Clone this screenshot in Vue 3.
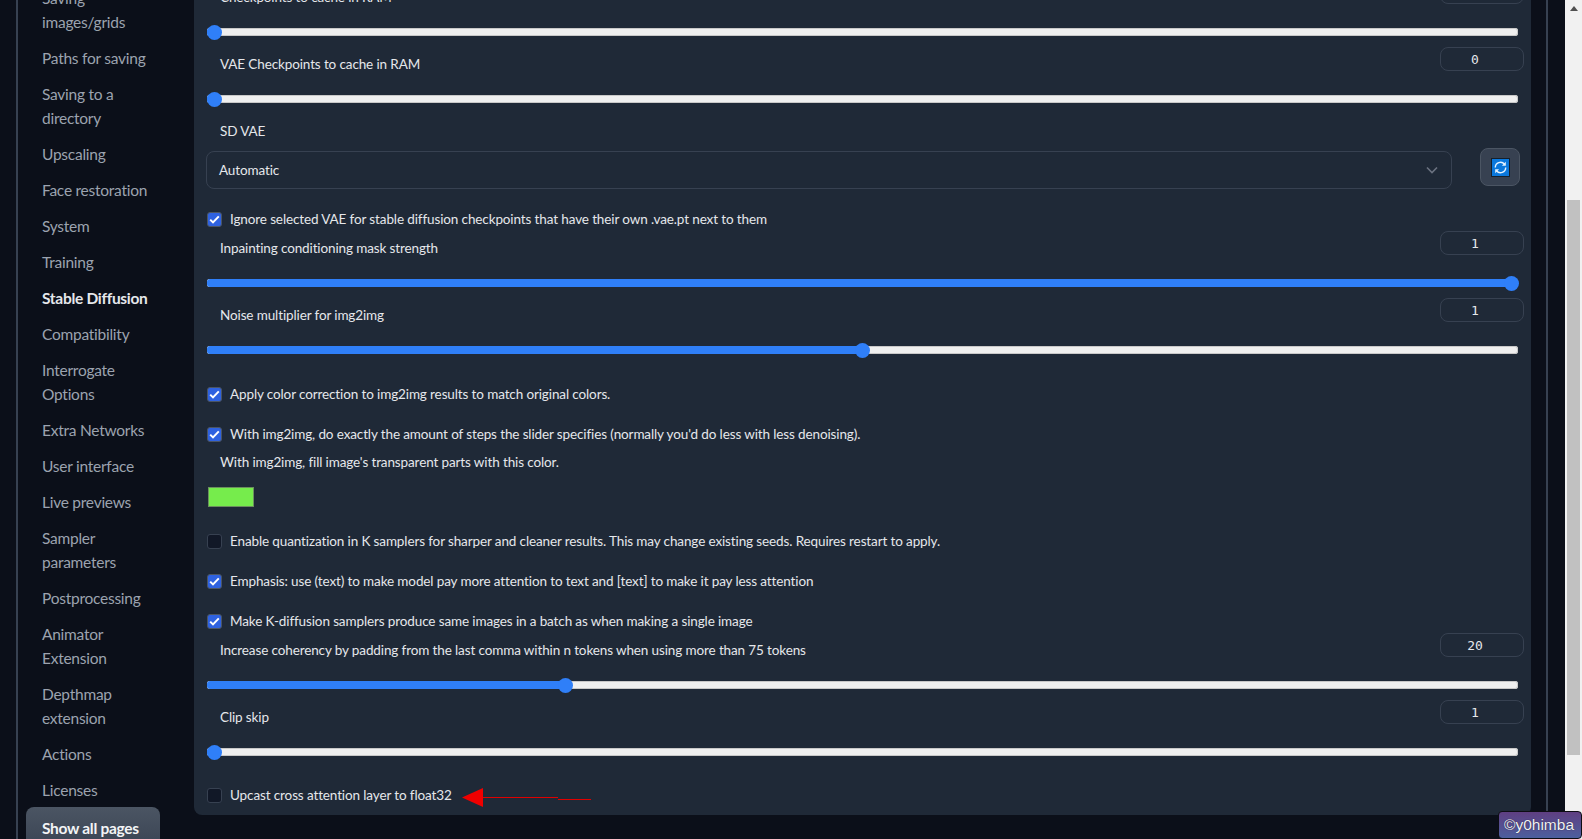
<script setup>
const pages = [
  { name: 'Saving images/grids' },
  { name: 'Paths for saving' },
  { name: 'Saving to a directory' },
  { name: 'Upscaling' },
  { name: 'Face restoration' },
  { name: 'System' },
  { name: 'Training' },
  { name: 'Stable Diffusion', active: true },
  { name: 'Compatibility' },
  { name: 'Interrogate Options' },
  { name: 'Extra Networks' },
  { name: 'User interface' },
  { name: 'Live previews' },
  { name: 'Sampler parameters' },
  { name: 'Postprocessing' },
  { name: 'Animator Extension' },
  { name: 'Depthmap extension' },
  { name: 'Actions' },
  { name: 'Licenses' },
]

const thumbStart = 7
const thumbSpan = 1297
const thumbLeft = (fraction) => `${thumbStart + thumbSpan * fraction}px`
const fillWidth = (fraction) => `${thumbStart + thumbSpan * fraction}px`

const rows = [
  { type: 'slider', label: 'Checkpoints to cache in RAM', value: '0', fraction: 0, gap: 'g0' },
  { type: 'slider', label: 'VAE Checkpoints to cache in RAM', value: '0', fraction: 0, gap: 'g5' },
  { type: 'select', label: 'SD VAE', value: 'Automatic', gap: 'g12' },
  { type: 'check', label: 'Ignore selected VAE for stable diffusion checkpoints that have their own .vae.pt next to them', checked: true, gap: 'g20' },
  { type: 'slider', label: 'Inpainting conditioning mask strength', value: '1', fraction: 1, gap: 'g2' },
  { type: 'slider', label: 'Noise multiplier for img2img', value: '1', fraction: 0.5, gap: 'g5' },
  { type: 'check', label: 'Apply color correction to img2img results to match original colors.', checked: true, gap: 'g24' },
  { type: 'check', label: "With img2img, do exactly the amount of steps the slider specifies (normally you'd do less with less denoising).", checked: true, gap: 'g20' },
  { type: 'color', label: "With img2img, fill image's transparent parts with this color.", gap: 'g8' },
  { type: 'check', label: 'Enable quantization in K samplers for sharper and cleaner results. This may change existing seeds. Requires restart to apply.', checked: false, gap: 'g24' },
  { type: 'check', label: 'Emphasis: use (text) to make model pay more attention to text and [text] to make it pay less attention', checked: true, gap: 'g20' },
  { type: 'check', label: 'Make K-diffusion samplers produce same images in a batch as when making a single image', checked: true, gap: 'g20' },
  { type: 'slider', label: 'Increase coherency by padding from the last comma within n tokens when using more than 75 tokens', value: '20', fraction: 0.2707, gap: 'g2' },
  { type: 'slider', label: 'Clip skip', value: '1', fraction: 0, gap: 'g5' },
  { type: 'check', label: 'Upcast cross attention layer to float32', checked: false, gap: 'g23', arrow: true },
]
</script>

<template>
  <div class="page">
    <div class="frame">
      <nav class="sidebar">
        <a v-for="p in pages" :key="p.name" class="nav-item" :class="{ active: p.active }">{{ p.name }}</a>
        <button class="show-all">Show all pages</button>
      </nav>
      <main class="panel">
        <div v-for="r in rows" :key="r.label" :class="['row', r.gap]">
          <template v-if="r.type === 'slider'">
            <div class="slider-head">
              <span class="label slider-label">{{ r.label }}</span>
              <span class="numbox"><span class="num">{{ r.value }}</span></span>
            </div>
            <div class="slider">
              <div class="track"></div>
              <div class="fill" :style="{ width: fillWidth(r.fraction) }"></div>
              <div class="thumb" :style="{ left: thumbLeft(r.fraction) }"></div>
            </div>
          </template>

          <template v-else-if="r.type === 'select'">
            <div class="label select-label">{{ r.label }}</div>
            <div class="select-line">
              <div class="select">
                <span>{{ r.value }}</span>
                <svg class="chevron" width="12" height="8" viewBox="0 0 12 8" fill="none">
                  <path d="M1 1.5 L6 6.5 L11 1.5" stroke="#6b7280" stroke-width="1.6" />
                </svg>
              </div>
              <button class="refresh" aria-label="Refresh">
                <svg width="19" height="19" viewBox="0 0 19 19">
                  <rect x="0.5" y="0.5" width="18" height="18" fill="#0b78dc" stroke="#15202c" />
                  <path d="M4.3 9.5 A5.2 5.2 0 0 1 13.5 6.2" fill="none" stroke="#e6f3ff" stroke-width="1.4" />
                  <path d="M14.7 9.5 A5.2 5.2 0 0 1 5.5 12.8" fill="none" stroke="#e6f3ff" stroke-width="1.4" />
                  <path d="M14.8 3.8 V7.8 H10.9 Z" fill="#e6f3ff" />
                  <path d="M4.2 15.2 V11.2 H8.1 Z" fill="#e6f3ff" />
                </svg>
              </button>
            </div>
          </template>

          <template v-else-if="r.type === 'check'">
            <label class="check-row">
              <span class="box" :class="{ on: r.checked }">
                <svg v-if="r.checked" width="11" height="9" viewBox="0 0 11 9" fill="none">
                  <path d="M1.2 4.6 L4 7.4 L9.8 1.4" stroke="#fff" stroke-width="2" />
                </svg>
              </span>
              <span class="label">{{ r.label }}</span>
              <svg v-if="r.arrow" class="arrow" width="130" height="20" viewBox="0 0 130 20">
                <path d="M0 9.5 L21 0 V19 Z" fill="#f00000" />
                <path d="M21 9.5 H96" fill="none" stroke="#e00000" stroke-width="1" />
                <path d="M96 11.5 H129" fill="none" stroke="#e00000" stroke-width="1" />
              </svg>
            </label>
          </template>

          <template v-else>
            <div class="label color-label">{{ r.label }}</div>
            <div class="swatch"></div>
          </template>
        </div>
      </main>
    </div>
    <div class="scrollbar">
      <span class="scroll-up"></span>
      <div class="scroll-thumb"></div>
    </div>
    <div class="watermark">©y0himba</div>
  </div>
</template>

<style>
html, body { margin: 0; padding: 0; overflow: hidden; background: #0b0f19; }
</style>

<style scoped>
.page {
  position: relative;
  display: flex;
  width: 1582px;
  height: 839px;
  overflow: hidden;
  background: #0b0f19;
  font-family: Lato, "Noto Sans", sans-serif;
  font-size: 13.5px;
  color: #e5e7eb;
}
.frame {
  display: flex;
  align-items: flex-start;
  box-sizing: border-box;
  width: 1532px;
  height: 839px;
  margin-left: 16px;
  margin-right: 17px;
  border-left: 2px solid #374151;
  border-right: 2px solid #374151;
}
.sidebar {
  display: flex;
  flex-direction: column;
  flex: none;
  box-sizing: border-box;
  width: 176px;
  margin-top: -14px;
  padding-left: 8px;
  padding-right: 8px;
  gap: 12px;
}
.nav-item {
  display: block;
  box-sizing: border-box;
  padding: 0 24px 0 16px;
  font-size: 15.5px;
  letter-spacing: -0.25px;
  line-height: 24px;
  color: #9ca3af;
}
.nav-item.active {
  color: #e5e7eb;
  font-weight: 700;
  letter-spacing: -0.3px;
  white-space: nowrap;
}
.show-all {
  display: block;
  flex: none;
  box-sizing: border-box;
  width: 134px;
  margin-top: -7px;
  padding: 9px 0 15px 16px;
  border: 0;
  border-radius: 8px;
  background: linear-gradient(to bottom, #4b5563, #374151);
  color: #f3f4f6;
  font: 700 15.5px/24px Lato, "Noto Sans", sans-serif;
  letter-spacing: -0.3px;
  text-align: left;
}
.panel {
  display: flex;
  flex-direction: column;
  flex: none;
  box-sizing: border-box;
  width: 1337px;
  margin-top: -20px;
  padding: 0 7px 10px 12px;
  background: #1f2937;
  border-radius: 0 0 8px 8px;
}
.g0 { margin-top: 0; }
.g2 { margin-top: 2px; }
.g5 { margin-top: 5px; }
.g8 { margin-top: 8px; }
.g12 { margin-top: 12px; }
.g20 { margin-top: 20px; }
.g23 { margin-top: 23px; }
.g24 { margin-top: 24px; }

.label {
  font-size: 13.5px;
  letter-spacing: -0.12px;
  line-height: 20px;
  color: #e5e7eb;
  white-space: nowrap;
}
.slider-head {
  display: flex;
  justify-content: space-between;
  align-items: flex-start;
  height: 24px;
  padding-left: 14px;
}
.slider-label { margin-top: 7px; }
.numbox {
  display: flex;
  align-items: center;
  justify-content: center;
  box-sizing: border-box;
  width: 84px;
  height: 24px;
  padding-right: 14px;
  border: 1px solid #374151;
  border-radius: 8px;
}
.num {
  font-family: "DejaVu Sans Mono", "Liberation Mono", monospace;
  font-size: 13px;
  color: #e5e7eb;
}
.slider {
  position: relative;
  height: 20px;
  margin: 18px 6px 0 1px;
}
.track {
  position: absolute;
  inset: 6px 0;
  background: #efefef;
  border-radius: 3px;
  box-shadow: inset 0 0 0 1px #c8c8c8;
}
.fill {
  position: absolute;
  top: 6px;
  left: 0;
  height: 8px;
  background: #2f7ff8;
  border-radius: 3px 0 0 3px;
}
.thumb {
  position: absolute;
  top: 2.5px;
  width: 15px;
  height: 15px;
  margin-left: -7.5px;
  border-radius: 50%;
  background: #2f7ff8;
}

.select-label { padding-left: 14px; }
.select-line {
  display: flex;
  align-items: flex-start;
  justify-content: space-between;
  margin-top: 10px;
  padding-right: 4px;
}
.select {
  display: flex;
  align-items: center;
  justify-content: space-between;
  box-sizing: border-box;
  width: 1246px;
  height: 38px;
  padding: 0 13px 0 12px;
  border: 1px solid #374151;
  border-radius: 8px;
  font-size: 13.5px;
  letter-spacing: -0.12px;
}
.refresh {
  display: flex;
  align-items: center;
  justify-content: center;
  box-sizing: border-box;
  width: 40px;
  height: 38px;
  margin-top: -3px;
  padding: 0;
  border: 1px solid #4b5563;
  border-radius: 8px;
  background: #374151;
}

.check-row {
  display: flex;
  align-items: center;
  height: 20px;
  padding-left: 1px;
}
.box {
  display: flex;
  align-items: center;
  justify-content: center;
  flex: none;
  box-sizing: border-box;
  width: 15px;
  height: 15px;
  margin-right: 8px;
  border: 1px solid #374151;
  border-radius: 3px;
  background: #111827;
}
.box.on {
  background: #2f62e0;
  border-color: #4b5563;
}
.arrow { margin-left: 10px; margin-top: 5px; flex: none; }

.color-label { padding-left: 14px; }
.swatch {
  box-sizing: border-box;
  width: 46px;
  height: 20px;
  margin: 15px 0 0 2px;
  background: #76ec4c;
  border: 1px solid #6b8f5e;
}

.scrollbar {
  position: relative;
  flex: none;
  width: 17px;
  height: 839px;
  background: #f1f1f1;
}
.scroll-up {
  position: absolute;
  top: 6px;
  left: 5px;
  border-left: 4px solid transparent;
  border-right: 4px solid transparent;
  border-bottom: 5px solid #505050;
}
.scroll-thumb {
  position: absolute;
  top: 200px;
  left: 2px;
  width: 13px;
  height: 555px;
  background: #c1c1c1;
}
.watermark {
  position: absolute;
  right: 0;
  bottom: 0;
  box-sizing: border-box;
  width: 84px;
  height: 28px;
  padding-left: 5px;
  border: 1px solid #0d0d14;
  border-radius: 4px;
  background: linear-gradient(to bottom, #5f3f82, #4c5f9e);
  color: #f0f0f5;
  font: 15.5px/26px "Liberation Sans", Arial, sans-serif;
  text-shadow: 0 0 1px #15152a;
  white-space: nowrap;
}
</style>
